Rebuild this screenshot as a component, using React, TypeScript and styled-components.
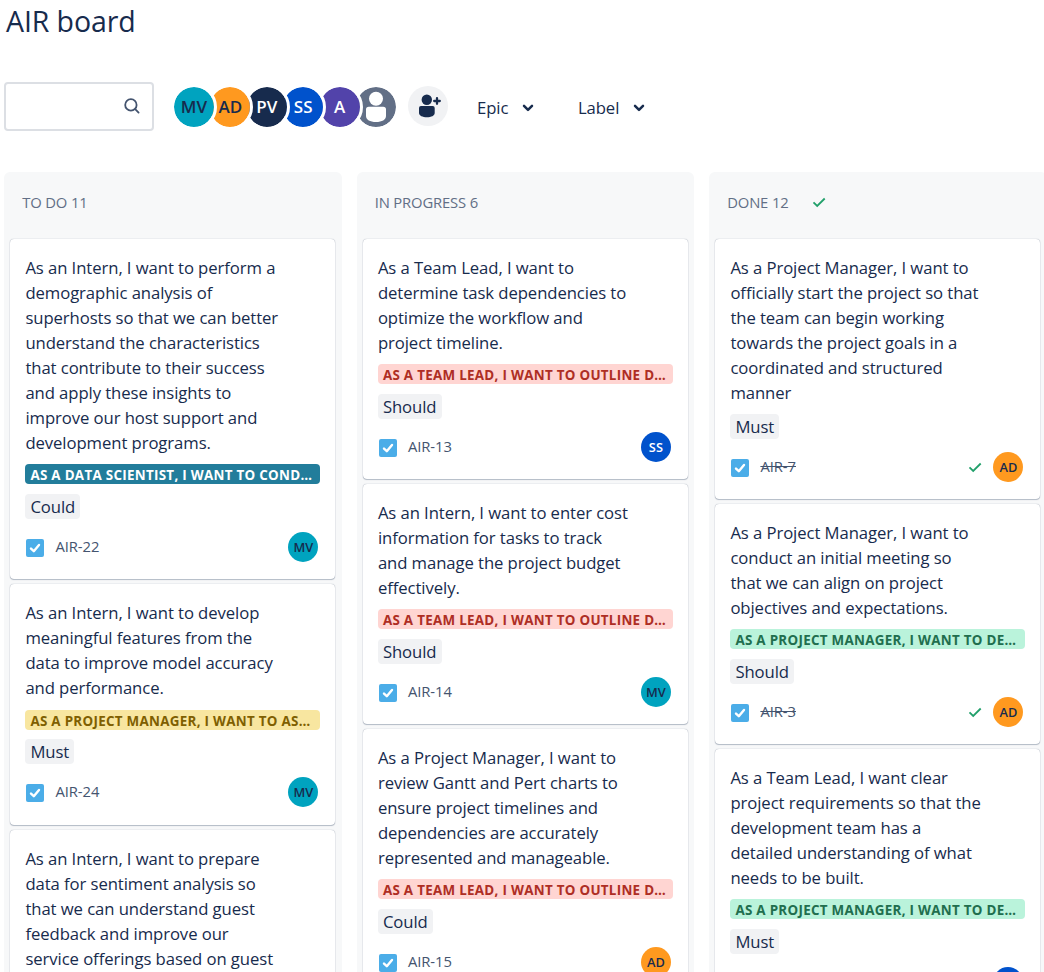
import React from "react";
import styled, { createGlobalStyle } from "styled-components";

const GlobalStyle = createGlobalStyle`
  * { box-sizing: border-box; }
  html, body { margin: 0; padding: 0; background: #fff; overflow: hidden; }
  body { font-family: "Open Sans", "Noto Sans", sans-serif; color: #172b4d; }
`;

const Page = styled.main`
  width: 1044px;
  height: 972px;
  overflow: hidden;
  padding-left: 4px;
  display: flex;
  flex-direction: column;
`;

const Title = styled.h1`
  margin: 0 0 0 2px;
  height: 82px;
  font-size: 28.5px;
  font-weight: 400;
  line-height: 43px;
  letter-spacing: -0.1px;
`;

const Toolbar = styled.div`
  display: flex;
  align-items: center;
  height: 49px;
  margin-bottom: 41px;
`;

const SearchBox = styled.div`
  width: 150px;
  height: 49px;
  border: 2px solid #dcdfe4;
  border-radius: 4px;
  display: flex;
  align-items: center;
  justify-content: flex-end;
  padding: 0 12px 2px 0;
  margin-right: 17px;
`;

const AvatarGroup = styled.div`
  display: flex;
  margin-right: 9px;
`;

const GroupAvatar = styled.div<{ $bg: string; $fg: string; $z: number }>`
  width: 46px;
  height: 46px;
  margin-right: -9.6px;
  border: 3px solid #fff;
  border-radius: 50%;
  background: ${(p) => p.$bg};
  background-clip: padding-box;
  color: ${(p) => p.$fg};
  z-index: ${(p) => p.$z};
  display: flex;
  align-items: center;
  justify-content: center;
  font-size: 17px;
  font-weight: 600;
  line-height: 40px;
  overflow: hidden;
  &:last-child { margin-right: 0; }
`;

const AddPerson = styled.div`
  width: 40px;
  height: 40px;
  border-radius: 50%;
  background: #f1f2f4;
  margin: -2px 29px 0 0;
`;

const Filter = styled.div<{ $gap: number }>`
  display: flex;
  align-items: center;
  gap: 14px;
  font-size: 16.7px;
  line-height: 25px;
  letter-spacing: -0.08px;
  margin: 1px ${(p) => p.$gap}px 0 0;
`;

const ChevronSvg = styled.svg`
  margin-top: 2px;
`;

const Board = styled.div`
  display: flex;
  gap: 15px;
  flex: none;
`;

const Column = styled.section`
  flex: none;
  width: 337.5px;
  height: 800px;
  background: #f7f8f9;
  border-radius: 6px 6px 0 0;
  padding: 0 6.25px 0 6px;
`;

const ColumnHeader = styled.header`
  height: 67px;
  padding: 0 0 8px 12.2px;
  display: flex;
  align-items: center;
  gap: 23.5px;
  color: #626f86;
  font-size: 14.8px;
  letter-spacing: -0.15px;
`;

const Card = styled.article`
  background: #fff;
  border-radius: 4px;
  box-shadow: 0 1px 1px rgba(9, 30, 66, 0.25), 0 0 1px rgba(9, 30, 66, 0.45);
  padding: 16px 15px 17px 15.4px;
  margin-bottom: 5px;
  display: flex;
  flex-direction: column;
  align-items: flex-start;
`;

const Summary = styled.div<{ $gap: number }>`
  font-size: 16.7px;
  line-height: 25px;
  letter-spacing: -0.08px;
  white-space: pre;
  margin-bottom: ${(p) => p.$gap}px;
`;

const EpicTag = styled.div<{ $bg: string; $fg: string; $gap: number }>`
  width: 295px;
  height: 20px;
  margin-bottom: ${(p) => p.$gap}px;
  padding: 0 5px;
  border-radius: 4px;
  background: ${(p) => p.$bg};
  color: ${(p) => p.$fg};
  font-size: 13.4px;
  font-weight: 700;
  letter-spacing: 0.29px;
  line-height: 22px;
  white-space: nowrap;
  overflow: hidden;
`;

const Label = styled.div`
  height: 25px;
  padding: 0 5px;
  border-radius: 4px;
  background: #f1f2f4;
  font-size: 16.7px;
  line-height: 25px;
  letter-spacing: -0.08px;
  margin-bottom: 13px;
`;

const Footer = styled.footer<{ $extra: number }>`
  width: 293px;
  height: 30px;
  margin-bottom: ${(p) => p.$extra}px;
  display: flex;
  align-items: center;
`;

const TaskSquare = styled.svg`
  margin-top: 2px;
`;

const Key = styled.span<{ $done?: boolean }>`
  flex: 1;
  margin: 0 0 2px 10px;
  color: #44546f;
  font-size: 14.8px;
  line-height: 20px;
  letter-spacing: -0.05px;
  text-decoration: ${(p) => (p.$done ? "line-through" : "none")};
`;

const Assignee = styled.div<{ $bg: string; $fg: string }>`
  width: 30px;
  height: 30px;
  margin-left: 11px;
  border-radius: 50%;
  background: ${(p) => p.$bg};
  color: ${(p) => p.$fg};
  font-size: 12.8px;
  font-weight: 600;
  line-height: 30px;
  text-align: center;
`;

const people: Record<string, { bg: string; fg: string }> = {
  MV: { bg: "#00a3bf", fg: "#172b4d" },
  AD: { bg: "#ff991f", fg: "#172b4d" },
  PV: { bg: "#172b4d", fg: "#fff" },
  SS: { bg: "#0052cc", fg: "#fff" },
  A: { bg: "#5243aa", fg: "#fff" },
};

const epics = {
  teal: { bg: "#227d9b", fg: "#fff", text: "AS A DATA SCIENTIST, I WANT TO COND…" },
  yellow: { bg: "#f8e6a0", fg: "#7f5f01", text: "AS A PROJECT MANAGER, I WANT TO AS…" },
  red: { bg: "#ffd5d2", fg: "#ae2e24", text: "AS A TEAM LEAD, I WANT TO OUTLINE D…" },
  green: { bg: "#baf3db", fg: "#216e4e", text: "AS A PROJECT MANAGER, I WANT TO DE…" },
};

interface Issue {
  lines: string[];
  epic?: keyof typeof epics;
  shift?: number;
  label?: string;
  id: string;
  who?: string;
}

const todo: Issue[] = [
  {
    lines: [
      "As an Intern, I want to perform a",
      "demographic analysis of",
      "superhosts so that we can better",
      "understand the characteristics",
      "that contribute to their success",
      "and apply these insights to",
      "improve our host support and",
      "development programs.",
    ],
    epic: "teal", label: "Could", id: "AIR-22", who: "MV",
  },
  {
    lines: [
      "As an Intern, I want to develop",
      "meaningful features from the",
      "data to improve model accuracy",
      "and performance.",
    ],
    epic: "yellow", shift: 1, label: "Must", id: "AIR-24", who: "MV",
  },
  {
    lines: [
      "As an Intern, I want to prepare",
      "data for sentiment analysis so",
      "that we can understand guest",
      "feedback and improve our",
      "service offerings based on guest",
    ],
    id: "",
  },
];

const progress: Issue[] = [
  {
    lines: [
      "As a Team Lead, I want to",
      "determine task dependencies to",
      "optimize the workflow and",
      "project timeline.",
    ],
    epic: "red", label: "Should", id: "AIR-13", who: "SS",
  },
  {
    lines: [
      "As an Intern, I want to enter cost",
      "information for tasks to track",
      "and manage the project budget",
      "effectively.",
    ],
    epic: "red", label: "Should", id: "AIR-14", who: "MV",
  },
  {
    lines: [
      "As a Project Manager, I want to",
      "review Gantt and Pert charts to",
      "ensure project timelines and",
      "dependencies are accurately",
      "represented and manageable.",
    ],
    epic: "red", label: "Could", id: "AIR-15", who: "AD",
  },
];

const done: Issue[] = [
  {
    lines: [
      "As a Project Manager, I want to",
      "officially start the project so that",
      "the team can begin working",
      "towards the project goals in a",
      "coordinated and structured",
      "manner",
    ],
    label: "Must", id: "AIR-7", who: "AD",
  },
  {
    lines: [
      "As a Project Manager, I want to",
      "conduct an initial meeting so",
      "that we can align on project",
      "objectives and expectations.",
    ],
    epic: "green", label: "Should", id: "AIR-3", who: "AD",
  },
  {
    lines: [
      "As a Team Lead, I want clear",
      "project requirements so that the",
      "development team has a",
      "detailed understanding of what",
      "needs to be built.",
    ],
    epic: "green", label: "Must", id: "", who: "SS",
  },
];

const Chevron = () => (
  <ChevronSvg width="12" height="8" viewBox="0 0 12 8" fill="none" stroke="#172b4d" strokeWidth="2.5" strokeLinecap="round" strokeLinejoin="round">
    <path d="M2 1.8 6 5.8 10 1.8" />
  </ChevronSvg>
);

const DoneCheck = () => (
  <svg width="14" height="12" viewBox="0 0 14 12" fill="none" stroke="#22a06b" strokeWidth="1.8">
    <path d="M1.5 6.3 5.2 9.9 12.7 2.5" />
  </svg>
);

const TaskIcon = () => (
  <TaskSquare width="20" height="20" viewBox="0 0 20 20">
    <rect x="1" y="1" width="18" height="18" rx="2" fill="#4bade8" />
    <path d="M6 10.6 8.8 13.2 14 7" fill="none" stroke="#fff" strokeWidth="2.4" strokeLinecap="round" strokeLinejoin="round" />
  </TaskSquare>
);

const IssueCard = ({ issue, isDone }: { issue: Issue; isDone?: boolean }) => {
  const epic = issue.epic && epics[issue.epic];
  const person = issue.who ? people[issue.who] : undefined;
  const shift = issue.shift ?? 0;
  return (
    <Card>
      <Summary $gap={9 + shift}>{issue.lines.join("\n")}</Summary>
      {epic && <EpicTag $bg={epic.bg} $fg={epic.fg} $gap={10 - shift}>{epic.text}</EpicTag>}
      {issue.label && <Label>{issue.label}</Label>}
      {person && (
        <Footer $extra={shift}>
          <TaskIcon />
          <Key $done={isDone}>{issue.id}</Key>
          {isDone && <DoneCheck />}
          <Assignee $bg={person.bg} $fg={person.fg}>{issue.id && issue.who}</Assignee>
        </Footer>
      )}
    </Card>
  );
};

export default function App() {
  return (
    <>
      <GlobalStyle />
      <Page>
        <Title>AIR board</Title>
        <Toolbar>
          <SearchBox>
            <svg width="16" height="16" viewBox="0 0 16 16" fill="none" stroke="#44546f" strokeWidth="1.8" strokeLinecap="round">
              <circle cx="6.9" cy="6.9" r="5.7" />
              <path d="M11.2 11.2 14.6 14.6" />
            </svg>
          </SearchBox>
          <AvatarGroup>
            {Object.entries(people).map(([name, c], i) => (
              <GroupAvatar key={name} $bg={c.bg} $fg={c.fg} $z={10 - i}>{name}</GroupAvatar>
            ))}
            <GroupAvatar $bg="#626f86" $fg="#fff" $z={1}>
              <svg width="40" height="40" viewBox="0 0 40 40" fill="#fff">
                <circle cx="20" cy="11.8" r="7" />
                <path d="M10 22.5a2.8 2.8 0 0 1 2.8-2.8h14.4a2.8 2.8 0 0 1 2.8 2.8v6.5c0 3.8-4 6-10 6s-10-2.2-10-6z" />
              </svg>
            </GroupAvatar>
          </AvatarGroup>
          <AddPerson>
            <svg width="40" height="40" viewBox="0 0 40 40" fill="#172b4d">
              <circle cx="18.8" cy="13.8" r="5.2" />
              <path d="M11 22a2 2 0 0 1 2-2h11.7a2 2 0 0 1 2 2v5c0 2.8-3.5 4.2-7.8 4.2S11 29.8 11 27z" />
              <path d="M29 12.2v5.600M26.200 15h5.600" stroke="#172b4d" strokeWidth="2.3" strokeLinecap="round" />
            </svg>
          </AddPerson>
          <Filter $gap={43.5}>Epic<Chevron /></Filter>
          <Filter $gap={0}>Label<Chevron /></Filter>
        </Toolbar>
        <Board>
          <Column>
            <ColumnHeader>TO DO 11</ColumnHeader>
            {todo.map((i, n) => <IssueCard key={n} issue={i} />)}
          </Column>
          <Column>
            <ColumnHeader>IN PROGRESS 6</ColumnHeader>
            {progress.map((i, n) => <IssueCard key={n} issue={i} />)}
          </Column>
          <Column>
            <ColumnHeader>DONE 12<DoneCheck /></ColumnHeader>
            {done.map((i, n) => <IssueCard key={n} issue={i} isDone />)}
          </Column>
        </Board>
      </Page>
    </>
  );
}
